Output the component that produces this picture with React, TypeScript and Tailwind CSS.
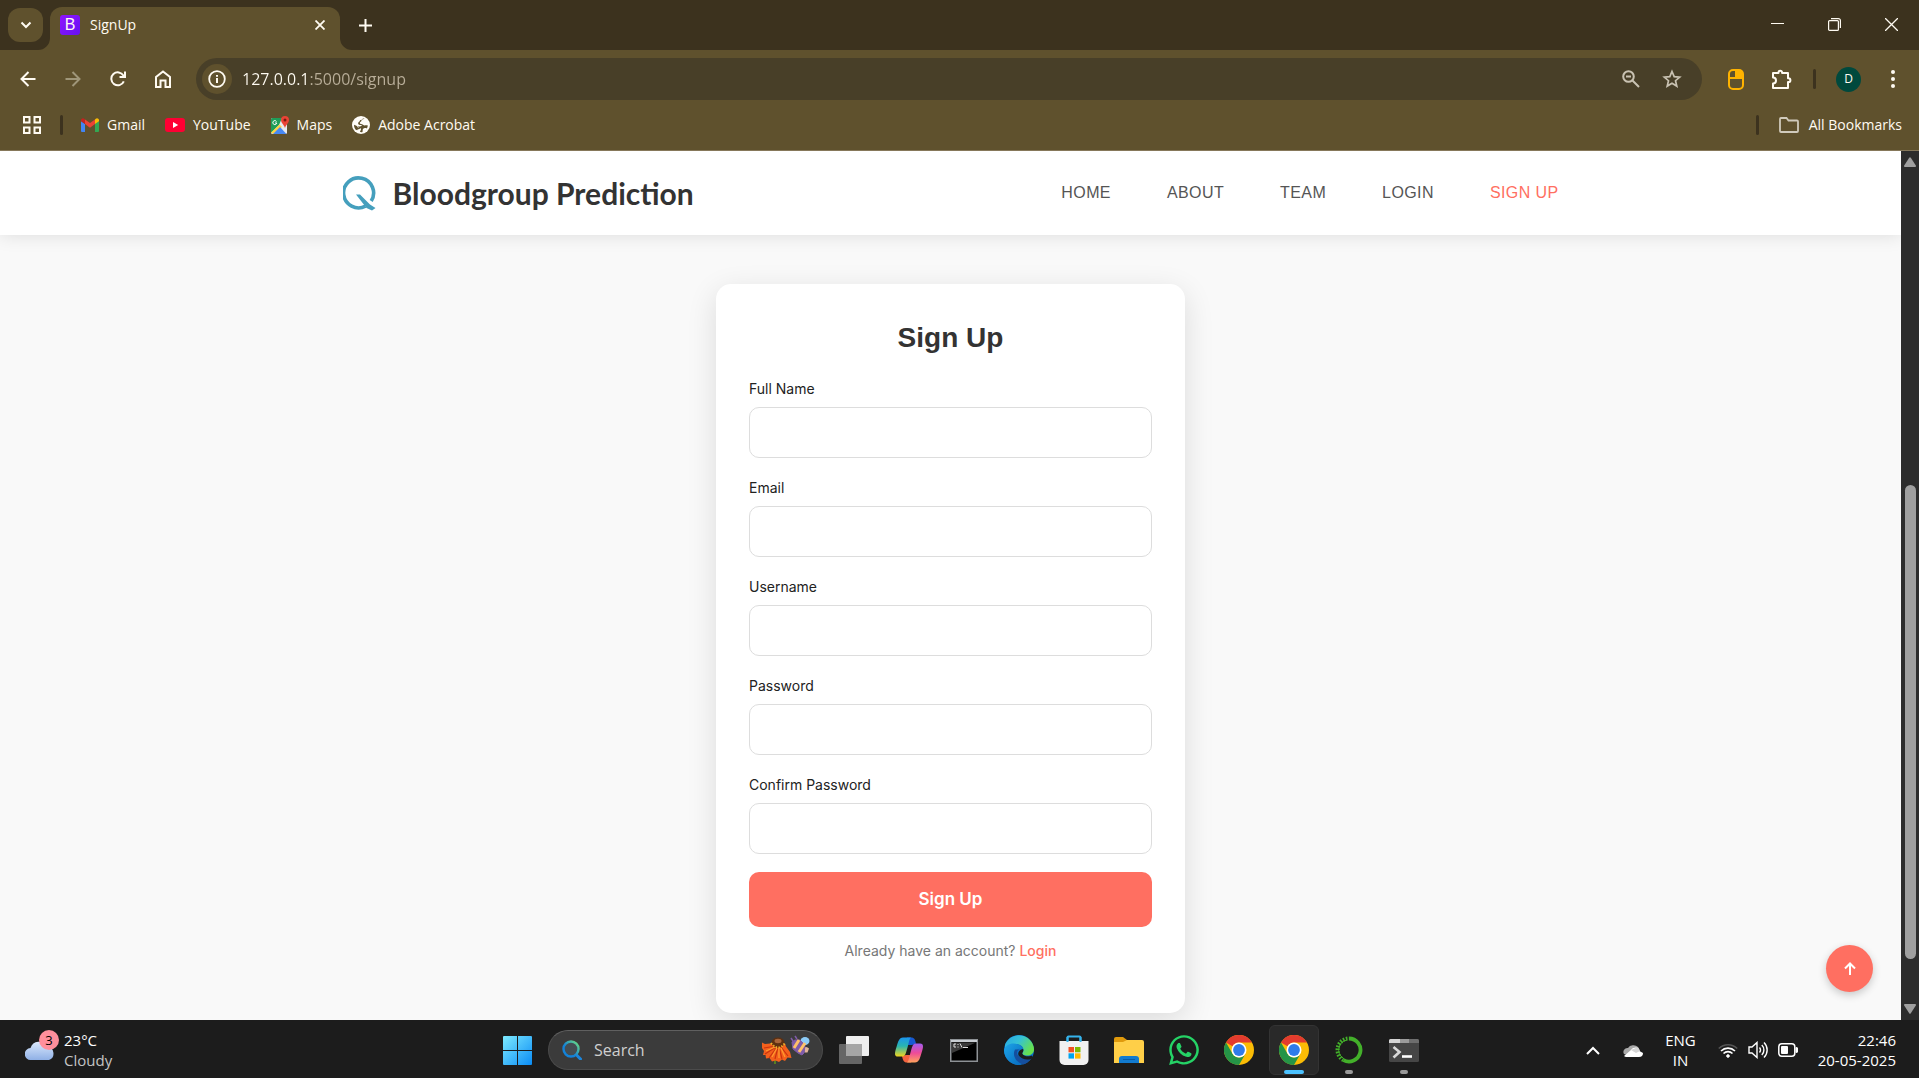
import React, { ReactNode } from "react";
import { FaWhatsapp } from "react-icons/fa";

type IconProps = { children: ReactNode; className: string; box: string };

function Icon({ children, className, box }: IconProps) {
  return (
    <svg
      viewBox={box}
      className={className}
      fill="none"
      stroke="currentColor"
      strokeWidth="2"
      aria-hidden="true"
    >
      {children}
    </svg>
  );
}

/* ---------- Browser ---------- */

function TabStrip() {
  return (
    <header className="flex h-[50px] items-end bg-[#3c321e] text-[#fffbf2]">
      <button aria-label="Search tabs" className="mb-2 ml-2 flex h-[34px] w-[35px] items-center justify-center rounded-xl bg-[#5f512d]">
        <Icon box="0 0 12 12" className="size-3"><path d="M1.5 3.5 6 8l4.500-4.500" /></Icon>
      </button>
      <div className="relative ml-[7px] flex h-[43px] w-[290px] items-center rounded-t-xl bg-[#5f512d] pb-2 pl-2.5 pr-[13px]">
        <svg viewBox="0 0 12 12" className="absolute -left-3 bottom-0 size-3 fill-[#5f512d]" aria-hidden="true"><path d="M12 0v12H0A12 12 0 0 0 12 0Z" /></svg>
        <svg viewBox="0 0 12 12" className="absolute -right-3 bottom-0 size-3 fill-[#5f512d]" aria-hidden="true"><path d="M0 0v12h12A12 12 0 0 1 0 0Z" /></svg>
        <span className="flex size-5 items-center justify-center rounded-[3px] bg-linear-to-br from-[#9013fe] to-[#6610f2] font-['Liberation_Sans'] text-base leading-none">B</span>
        <span className="ml-2.5 flex-1 text-sm">SignUp</span>
        <button aria-label="Close tab" className="p-0.5">
          <Icon box="0 0 10 10" className="size-2.5"><path d="m.5.5 9 9m0-9-9 9" strokeWidth="1.800" /></Icon>
        </button>
      </div>
      <button aria-label="New tab" className="mb-[18px] ml-[19px]">
        <Icon box="0 0 13 13" className="size-[13px]"><path d="M6.500 0v13M0 6.500h13" /></Icon>
      </button>
      <div className="mb-[19px] ml-auto mr-[21px] flex items-center gap-11">
        <button aria-label="Minimize"><Icon box="0 0 13 13" className="size-[13px]"><path d="M0 5.500h13" strokeWidth="1" /></Icon></button>
        <button aria-label="Restore">
          <Icon box="0 0 13 13" className="size-[13px]"><g strokeWidth="1.200"><rect x=".6" y="2.600" width="9.800" height="9.800" rx="1" /><path d="M3 .6h7.400a2 2 0 0 1 2 2V10" /></g></Icon>
        </button>
        <button aria-label="Close window"><Icon box="0 0 13 13" className="size-[13px]"><path d="m0 0 13 13M13 0 0 13" strokeWidth="1.300" /></Icon></button>
      </div>
    </header>
  );
}

function Toolbar() {
  return (
    <div className="flex h-[57px] items-center bg-[#5f512d] pl-5 pr-6 pt-px text-[#fffbf2]">
      <div className="flex gap-[29px]">
        <button aria-label="Back"><Icon box="0 0 16 16" className="size-4"><path d="M15.500 8H2M8.500 1 1.500 8l7 7" /></Icon></button>
        <button aria-label="Forward" className="text-[#9f9679]"><Icon box="0 0 16 16" className="size-4"><path d="M.5 8H14M7.500 1l7 7-7 7" /></Icon></button>
        <button aria-label="Reload">
          <Icon box="0 0 16 16" className="size-4"><path d="M13.800 10.400A6.500 6.500 0 1 1 13.400 4.500L14.500 6M15 .5V6H9.500" /></Icon>
        </button>
        <button aria-label="Home"><Icon box="0 0 16 18" className="h-[18px] w-4"><path d="M1 17V7l7-5.500L15 7v10h-4.500v-6.500h-5V17Z" /></Icon></button>
      </div>
      <div className="ml-[25px] flex h-[42px] flex-1 items-center rounded-full bg-[#483f28] pl-1.5 pr-5">
        <button aria-label="Site information" className="flex size-[30px] items-center justify-center rounded-full bg-[#5f512d]">
          <Icon box="0 0 18 18" className="size-[18px]"><circle cx="9" cy="9" r="7.800" strokeWidth="1.800" /><path d="M9 8v5M9 5v1.800" /></Icon>
        </button>
        {/* The host is bright and the rest of the address is dimmed. */}
        <input
          aria-label="Address"
          defaultValue="127.0.0.1:5000/signup"
          className="ml-2.5 min-w-0 flex-1 bg-linear-to-r from-[#fffbf2] from-[68px] to-[#b9ae99] to-[68px] bg-clip-text text-base text-transparent caret-white outline-none"
        />
        <div className="flex items-center gap-[22px] text-[#c9c2b2]">
          <button aria-label="Zoom"><Icon box="0 0 18 18" className="size-[18px]"><circle cx="6.500" cy="6.500" r="5.300" /><path d="m10.500 10.500 6.500 6.500M4 6.500h5" /></Icon></button>
          <button aria-label="Bookmark this page"><Icon box="0 0 20 20" className="size-5"><path d="m10 2.500 2.200 5.100 5.500.5-4.200 3.600 1.300 5.400L10 14.200l-4.800 2.900 1.300-5.400-4.200-3.600 5.500-.5Z" strokeWidth="1.700" /></Icon></button>
        </div>
      </div>
      <button aria-label="Mouse extension" className="ml-[26px]">
        <svg viewBox="0 0 16 21" className="h-[21px] w-4" aria-hidden="true"><rect x="1" y="1" width="14" height="19" rx="4" fill="none" stroke="#ffb300" strokeWidth="2" /><path d="M7 1h5a3 3 0 0 1 3 3v6H1V8h6Z" fill="#ffb300" /></svg>
      </button>
      <button aria-label="Extensions" className="ml-[27px]">
        <Icon box="0 0 21 21" className="size-[21px]"><path d="M2 4h5.500v-.5a1.800 1.800 0 0 1 3.600 0V4H17v5.300h.5a1.900 1.900 0 0 1 0 3.800H17V19H2v-4.500a3 3 0 0 0 0-6Z" strokeLinejoin="round" /></Icon>
      </button>
      <span className="ml-[21px] h-5 w-[3px] rounded-sm bg-[#3c321e]" />
      <button aria-label="Profile" className="ml-5 flex size-[25px] items-center justify-center rounded-full bg-[#00493d] text-xs">D</button>
      <button aria-label="Menu" className="ml-[30px]"><svg viewBox="0 0 4 18" className="h-[18px] w-1 fill-current" aria-hidden="true"><circle cx="2" cy="2" r="2" /><circle cx="2" cy="9" r="2" /><circle cx="2" cy="16" r="2" /></svg></button>
    </div>
  );
}

function GmailIcon() {
  return (
    <svg viewBox="0 0 18 14" className="h-3.5 w-[18px]" aria-hidden="true">
      <path d="M0 3v10a1 1 0 0 0 1 1h3V6Z" fill="#4285f4" />
      <path d="M18 3v10a1 1 0 0 1-1 1h-3V6Z" fill="#34a853" />
      <path d="M4 1.500 9 5l5-3.500V6L9 9.800 4 6Z" fill="#ea4335" />
      <path d="M0 2a2 2 0 0 1 3.200-1.200L4 1.500V6L0 3.300Z" fill="#c5221f" />
      <path d="M18 2A2 2 0 0 0 14.800.8l-.8.7V6l4-2.700Z" fill="#fbbc04" />
    </svg>
  );
}

function YoutubeIcon() {
  return <svg viewBox="0 0 20 14" className="h-3.5 w-5" aria-hidden="true"><rect width="20" height="14" rx="3" fill="#ff0033" /><path d="m8 4 5.200 3L8 10Z" fill="#fff" /></svg>;
}

function MapsIcon() {
  return (
    <svg viewBox="0 0 18 18" className="size-[18px]" aria-hidden="true">
      <rect y="2" width="16" height="16" rx="1.500" fill="#e8eaed" />
      <path d="M0 3.500A1.500 1.500 0 0 1 1.500 2H11L8 9l-8 8Z" fill="#1e9d58" />
      <path d="m0 16.500 8.500-8 2.500 2.400L2 18Z" fill="#fdd443" />
      <path d="M2 18 9 11l6.500 7Z" fill="#4788f4" />
      <path d="M5.500 5.500A2 2 0 1 0 5.800 7H4" fill="none" stroke="#fff" />
      <path d="M14 0a4 4 0 0 0-4 4c0 3 3 4.500 4 8 1-3.500 4-5 4-8a4 4 0 0 0-4-4Z" fill="#ea4335" />
      <circle cx="14" cy="4" r="1.500" fill="#791911" />
    </svg>
  );
}

function GlobeIcon() {
  return (
    <svg viewBox="0 0 18 18" className="size-[18px]" aria-hidden="true">
      <circle cx="9" cy="9" r="9" fill="#fffdf8" />
      <path d="M12.500 2.800c-1.500-.6-3 .4-3 1.700 0 1.500-1.700 1-1.700 2.500 0 1.300 2.200.8 3.200 1.800 1.200 1.200 2.500.2 4.800.7-.1 1-.4 2-.9 2.900-1.500-.4-3-.6-3.900.6-.6 1-.2 2-.5 2.900-.5.300-1.500.3-2.500.1.200-1.500 1-1.500 1-2.800 0-1-1.200-1.200-2-1.200-1.600 0-1.400-1.700-2.600-2.200L2.100 8.800c-.2 1.500.3 3.400 1.600 4.900l1.500.6c.3-1.500 3-.6 3-2.200-1.200-.3-2.200-.8-2.600-1.700 1.700.4 3.600 0 4.400-1.400-1.300.2-3.700.2-3.900-1.400C6 6 8 5.800 8 4.300Z" fill="#5f512d" />
    </svg>
  );
}

const bookmarks = [
  { label: "Gmail", icon: <GmailIcon /> },
  { label: "YouTube", icon: <YoutubeIcon /> },
  { label: "Maps", icon: <MapsIcon /> },
  { label: "Adobe Acrobat", icon: <GlobeIcon /> },
];

function BookmarkBar() {
  return (
    <nav aria-label="Bookmarks" className="flex h-11 items-center border-b border-[#86785a] bg-[#5f512d] pb-2 pl-[23px] pr-[17px] text-sm text-[#fffbf2]">
      <button aria-label="Apps"><Icon box="0 0 18 18" className="size-[18px]"><path d="M1 1h5.500v5.500H1ZM11.500 1H17v5.500h-5.500ZM1 11.500h5.500V17H1ZM11.500 11.500H17V17h-5.500Z" /></Icon></button>
      <span className="ml-[19px] h-5 w-[3px] rounded-sm bg-[#3c321e]" />
      <div className="ml-[18px] flex gap-5">
        {bookmarks.map((b) => (
          <a key={b.label} href="#" className="flex items-center gap-2 whitespace-nowrap">{b.icon}{b.label}</a>
        ))}
      </div>
      <span className="ml-auto h-5 w-[3px] rounded-sm bg-[#3c321e]" />
      <button className="ml-5 flex items-center gap-2.5 whitespace-nowrap">
        <Icon box="0 0 20 16" className="h-4 w-5 text-[#d0cabc]"><path d="M1 2a1 1 0 0 1 1-1h5.500l2 2.500H18a1 1 0 0 1 1 1V14a1 1 0 0 1-1 1H2a1 1 0 0 1-1-1Z" strokeWidth="1.800" /></Icon>
        All Bookmarks
      </button>
    </nav>
  );
}

/* ---------- Web page ---------- */

const links = ["Home", "About", "Team", "Login", "Sign Up"];

function SiteHeader() {
  return (
    <header className="relative z-10 bg-white shadow-[0_0_18px_rgba(0,0,0,0.12)]">
      <div className="mx-auto flex h-[84px] max-w-[1216px] items-center justify-between">
        <a href="#" className="flex items-center gap-4">
          <svg viewBox="0 0 34 36" className="h-9 w-[34px]" fill="none" stroke="#459fbd" strokeWidth="3.600" aria-hidden="true">
            <path d="M22.500 31.200A15 15 0 1 1 28.200 26" />
            <path d="M13 19.500h4L27 29.500l5.500 3.500-3.500 2.500-5.500-2.500Z" fill="#459fbd" stroke="none" />
          </svg>
          <span className="font-['Lato'] text-[30px] font-bold leading-9 text-[#333]">Bloodgroup Prediction</span>
        </a>
        <nav aria-label="Main" className="flex gap-14 font-['Liberation_Sans'] text-base uppercase leading-6 tracking-wide text-[#555]">
          {links.map((l) => (
            <a key={l} href="#" className={l === "Sign Up" ? "text-[#ff6f61]" : ""}>{l}</a>
          ))}
        </nav>
      </div>
    </header>
  );
}

const fields = [
  { id: "fullname", label: "Full Name", type: "text" },
  { id: "email", label: "Email", type: "email" },
  { id: "username", label: "Username", type: "text" },
  { id: "password", label: "Password", type: "password" },
  { id: "confirm", label: "Confirm Password", type: "password" },
];

function SignUpCard() {
  return (
    <section className="mx-auto mt-[49px] w-[469px] max-w-full rounded-[15px] bg-white px-[33px] pb-[52px] pt-[33px] font-['Inter'] shadow-[0_8px_30px_rgba(0,0,0,0.12)]">
      <h1 className="mb-5 text-center font-['Liberation_Sans'] text-[28px] font-bold leading-[42px] text-[#333]">Sign Up</h1>
      <form onSubmit={(e) => e.preventDefault()}>
        <div className="flex flex-col gap-5">
          {fields.map((f) => (
            <div key={f.id}>
              <label htmlFor={f.id} className="mb-2 block text-sm leading-5 text-[#222]">{f.label}</label>
              <input id={f.id} type={f.type} className="block h-[51px] w-full rounded-[10px] border border-[#ddd] px-4 outline-none" />
            </div>
          ))}
        </div>
        <button type="submit" className="mt-[18px] h-[55px] w-full rounded-[10px] bg-[#ff6f61] text-[17px] font-semibold text-white">Sign Up</button>
      </form>
      <p className="mt-3.5 text-center text-sm leading-5 text-[#777]">
        Already have an account? <a href="#" className="font-medium text-[#ff6f61]">Login</a>
      </p>
    </section>
  );
}

function Scrollbar() {
  return (
    <div className="flex w-[18px] flex-col items-center bg-[#2c2c2c] py-1.5 text-[#9f9f9f]">
      <svg viewBox="0 0 12 10" className="h-2.5 w-3 fill-current" aria-hidden="true"><path d="M5.200.8a1 1 0 0 1 1.600 0l5 7.700a1 1 0 0 1-.8 1.500H1a1 1 0 0 1-.8-1.500Z" /></svg>
      <div className="flex w-[11px] flex-1 flex-col">
        <div className="grow-[318]" />
        <div className="grow-[474] rounded-full bg-[#9f9f9f]" />
        <div className="grow-[45]" />
      </div>
      <svg viewBox="0 0 12 10" className="h-2.5 w-3 fill-current" aria-hidden="true"><path d="M5.200 9.200a1 1 0 0 0 1.600 0l5-7.700A1 1 0 0 0 11 0H1a1 1 0 0 0-.8 1.500Z" /></svg>
    </div>
  );
}

function WebPage() {
  return (
    <div className="flex min-h-0 flex-1">
      <main className="relative flex-1 overflow-hidden bg-[#f9f9f9]">
        <SiteHeader />
        <SignUpCard />
        <button aria-label="Back to top" className="absolute bottom-7 right-7 flex size-[47px] items-center justify-center rounded-full bg-[#ff6f61] text-white shadow-[0_3px_8px_rgba(0,0,0,0.2)]">
          <Icon box="0 0 12 14" className="h-3.5 w-3"><path d="M6 13V2M1 6.500 6 1.500l5 5" /></Icon>
        </button>
      </main>
      <Scrollbar />
    </div>
  );
}

/* ---------- Taskbar ---------- */

function SearchLens() {
  return (
    <svg viewBox="0 0 20 20" className="size-5" fill="none" aria-hidden="true">
      <defs><linearGradient id="lens" x1="0" y1="1" x2="1" y2="0"><stop offset=".4" stopColor="#1382d8" /><stop offset="1" stopColor="#6fe07a" /></linearGradient></defs>
      <path d="m14 14.500 4.500 4.500" stroke="#1b86dc" strokeWidth="3" strokeLinecap="round" />
      <circle cx="9" cy="9" r="7.500" fill="#444d52" stroke="url(#lens)" strokeWidth="2.400" />
    </svg>
  );
}

function FlowerArt() {
  return (
    <svg viewBox="0 0 48 30" className="h-[30px] w-12" aria-hidden="true">
      <path d="M13 24v5" stroke="#577f20" strokeWidth="2" />
      <path d="M0 7.500 3 9l5-.5h15l1 3 4 5.500 1.500 6-4-.5-2.500 3.500-3-1.500-3 2.500-3.500-1.500-3.500 1-2.500-3.500-3.500.5-.5-3.500L1 20l1-4-2-3Z" fill="#f4601c" />
      <path d="M14 11 2 13M14 12 3 19M15 12 7 23M16 12l-3 12M17 12l3 12M19 12l7 9" stroke="#c9330f" strokeWidth="1.200" />
      <path d="M13 12 4 16M15 13l-5 9M17 13l0 10M19 13l4 9" stroke="#ff9a2e" strokeWidth="1.300" />
      <ellipse cx="16" cy="7.500" rx="6.500" ry="5" fill="#5e3011" />
      <ellipse cx="16" cy="6" rx="3.500" ry="2.200" fill="#a9653a" />
      <path d="M9 8q7 9 14 0" fill="none" stroke="#eeb02c" strokeWidth="2" strokeDasharray="1.500 1.500" />
      <ellipse cx="43" cy="6" rx="4.500" ry="4" fill="#8ccbf7" />
      <path d="M42 12.500a4 4 0 0 1 5 1l-1.500 4h-3Z" fill="#e3b49a" />
      <path d="m30 7 3-2 5 0 5 5-1 8-2 2-4-2-5-4Z" fill="#7f5ba9" strokeLinejoin="round" stroke="#7f5ba9" />
      <path d="m32 13 5-8M37 17l6-9" stroke="#ffc168" strokeWidth="3" />
      <path d="m31 6-2-3m6 1-2-3" stroke="#7f5ba9" strokeWidth="1.500" />
    </svg>
  );
}

function TaskViewIcon() {
  return <svg viewBox="0 0 30 28" className="h-7 w-[30px]" aria-hidden="true"><rect x="7" width="23" height="20" rx="1" fill="#efefef" /><rect y="8" width="23" height="20" rx="1" fill="#666" /><path d="M7 8h16v12H7Z" fill="#a6a6a6" /></svg>;
}

function CopilotIcon() {
  return (
    <svg viewBox="0 0 30 26" className="h-[26px] w-[30px]" aria-hidden="true">
      <defs>
        <linearGradient id="cpa" x1="0" y1="0" x2="0" y2="1"><stop stopColor="#1b95ee" /><stop offset=".45" stopColor="#29b5b0" /><stop offset="1" stopColor="#f2d51c" /></linearGradient>
        <linearGradient id="cpb" x1="0" y1="0" x2="0" y2="1"><stop stopColor="#a35cf0" /><stop offset=".5" stopColor="#ee4b98" /><stop offset="1" stopColor="#ffa25c" /></linearGradient>
      </defs>
      <path d="M22 6.500C21 2 20 .5 17 .5h-4L11 8h7Z" fill="#1759d2" />
      <path d="M8 19c1 4 1.500 6.500 5 6.500h4L19 18h-7Z" fill="#f4633f" />
      <path d="M17 .5H9C5 .5 4 5 2.500 10S-.5 19.500 4 19.500h4.500c3 0 3.500-4 5-9S15 2 17 .5Z" fill="url(#cpa)" />
      <path d="M13 25.500h8c4 0 5-4.500 6.500-9.500s3-9.500-1.500-9.500h-4.500c-3 0-3.500 4-5 9S15 24 13 25.500Z" fill="url(#cpb)" />
    </svg>
  );
}

function CmdIcon() {
  return (
    <svg viewBox="0 0 28 23" className="h-[23px] w-7" aria-hidden="true">
      <rect x=".75" y=".75" width="26.500" height="21.500" fill="#000" stroke="#8e9296" strokeWidth="1.500" />
      <path d="M1 1h26v2H1Z" fill="#c8cdd2" /><path d="M2 3.500h24L2 14Z" fill="#3a3a3a" />
      <path d="M6 5H4v3h2M8 5v1m0 1.500v1M10 4.500l2 4M13 8.500h5" fill="none" stroke="#ddd" />
    </svg>
  );
}

function EdgeIcon() {
  return (
    <svg viewBox="0 0 30 30" className="size-[30px]" aria-hidden="true">
      <defs>
        <linearGradient id="eda" x1="0" y1="0" x2="1" y2=".5"><stop stopColor="#27a7e5" /><stop offset=".5" stopColor="#35c1d6" /><stop offset="1" stopColor="#66e04f" /></linearGradient>
        <linearGradient id="edb" x1="0" y1="0" x2="1" y2="1"><stop stopColor="#1ea5e8" /><stop offset="1" stopColor="#0669bd" /></linearGradient>
      </defs>
      <circle cx="15" cy="15" r="15" fill="#0b72c9" />
      <path d="M1 10A15 15 0 0 1 30 14c.3 4-3 6.500-7 6.500-4.500 0-5.500-1.500-4-3.500 2-4-2-8-7-8-4 0-8 1-11 5Z" fill="url(#eda)" />
      <path d="M0 15C1 11 5 8.500 9.500 8.500c5 0 9 3.500 9 5.500-5-1.500-9 2-8 7 .7 4 4 7 7 8.800A15 15 0 0 1 0 15Z" fill="url(#edb)" />
      <path d="M11 14.500c-3 5 .5 13 8.500 15 4-1.500 6.500-4 8-7-5 2.500-10 1.500-13-1.500-2-2-2-5 .5-6.500Z" fill="#154f9e" />
      <path d="M19 14c1.500 2-1.500 4-.5 5 1.700 3 7.500 2.500 9.500 1.500l1 2.500-2 1c-5 1.500-10-.5-12-3-1.500-2-1-6 4-7Z" fill="#1c1c1c" />
    </svg>
  );
}

function StoreIcon() {
  return (
    <svg viewBox="0 0 30 30" className="size-[30px]" aria-hidden="true">
      <path d="M8.500 7V2.500a1 1 0 0 1 1-1h11a1 1 0 0 1 1 1V7" fill="none" stroke="#35b3ec" strokeWidth="2" />
      <path d="M.5 6h29v19a5 5 0 0 1-5 5h-19a5 5 0 0 1-5-5Z" fill="#f1f1f1" />
      <path d="M8.500 2v5M21.500 2v5" stroke="#35b3ec" strokeWidth="2" />
      <path d="M9.500 12H15v5.300H9.500Z" fill="#f25022" /><path d="M16 12h5.500v5.300H16Z" fill="#7fba00" /><path d="M9.500 18.300H15v5.300H9.500Z" fill="#00a4ef" /><path d="M16 18.300h5.500v5.300H16Z" fill="#ffb900" />
    </svg>
  );
}

function FolderIcon() {
  return (
    <svg viewBox="0 0 30 27" className="h-[27px] w-[30px]" aria-hidden="true">
      <path d="M0 2a2 2 0 0 1 2-2h7l4 3v5H0Z" fill="#e09a0c" />
      <path d="M0 5h9l4-2h15a2 2 0 0 1 2 2v21H0Z" fill="#ffcf48" />
      <path d="M5 26v-4a3 3 0 0 1 3-3h14a3 3 0 0 1 3 3v4Z" fill="#127bd0" /><path d="M9 22.500h12" stroke="#0a5ba6" />
    </svg>
  );
}

function ChromeIcon() {
  return (
    <svg viewBox="0 0 30 30" className="size-[30px]" aria-hidden="true">
      <circle cx="15" cy="15" r="15" fill="#fbbc05" />
      <path d="M2 7.500A15 15 0 0 1 28 7.500H15A7.500 7.500 0 0 0 8.500 11.200Z" fill="#e33b2e" />
      <path d="M2 7.500 8.500 18.800A7.500 7.500 0 0 0 21.500 18.800L15 30A15 15 0 0 1 2 7.500Z" fill="#259447" />
      <circle cx="15" cy="15" r="7.500" fill="#fff" /><circle cx="15" cy="15" r="5.900" fill="#2f7bea" />
    </svg>
  );
}

function AnacondaIcon() {
  return (
    <svg viewBox="0 0 28 28" className="size-7" fill="none" stroke="#43b02a" aria-hidden="true">
      <path d="M14 2.500a11.500 11.500 0 1 1-5.500 21.600" strokeWidth="3.800" />
      <path d="M8.500 24.100A11.500 11.500 0 0 1 14 2.500" strokeWidth="4" strokeDasharray="1.600 1.400" />
      <path d="M8 22A10 10 0 0 1 12 4" strokeWidth="1" />
    </svg>
  );
}

function TerminalIcon() {
  return (
    <svg viewBox="0 0 30 23" className="h-[23px] w-[30px]" aria-hidden="true">
      <rect width="30" height="23" rx="1.500" fill="#464646" />
      <path d="M0 4V1.500A1.500 1.500 0 0 1 1.500 0H11v4Z" fill="#d5d5d5" /><path d="M11 0h9v4h-9Z" fill="#9b9b9b" /><path d="M20 0h8.500A1.500 1.500 0 0 1 30 1.500V4H20Z" fill="#6e6e6e" />
      <path d="m4.500 8 6 5-6 5.500" fill="none" stroke="#d8d8d8" strokeWidth="2.600" /><path d="M13 17.500h10" stroke="#fff" strokeWidth="2.600" />
    </svg>
  );
}

type TaskbarApp = { name: string; icon: ReactNode; state?: "active" | "open" };

const apps: TaskbarApp[] = [
  { name: "Task View", icon: <TaskViewIcon /> },
  { name: "Copilot", icon: <CopilotIcon /> },
  { name: "Command Prompt", icon: <CmdIcon /> },
  { name: "Edge", icon: <EdgeIcon /> },
  { name: "Microsoft Store", icon: <StoreIcon /> },
  { name: "File Explorer", icon: <FolderIcon /> },
  { name: "WhatsApp", icon: <FaWhatsapp className="size-[34px] text-[#25d366]" /> },
  { name: "Chrome", icon: <ChromeIcon /> },
  { name: "Chrome window", icon: <ChromeIcon />, state: "active" },
  { name: "Anaconda", icon: <AnacondaIcon />, state: "open" },
  { name: "Terminal", icon: <TerminalIcon />, state: "open" },
];

function Taskbar() {
  return (
    <footer className="grid h-[58px] shrink-0 grid-cols-[1fr_auto_1fr] items-center bg-[#1c1c1c] pt-0.5 text-[15px] leading-5 text-white">
      <button className="ml-[25px] flex items-center justify-self-start text-left">
        <span className="relative">
          <svg viewBox="0 0 30 20" className="h-5 w-[30px]" aria-hidden="true">
            <defs><linearGradient id="cloud" x1="0" y1="0" x2="0" y2="1"><stop stopColor="#dbe9fc" /><stop offset="1" stopColor="#8fb0e6" /></linearGradient></defs>
            <path d="M6 20a6 6 0 0 1-.5-12A9 9 0 0 1 22 6.500 7 7 0 0 1 24 20Z" fill="url(#cloud)" />
          </svg>
          <span className="absolute -top-2.5 left-3.5 flex size-5 items-center justify-center rounded-full bg-[#ff8f9c] text-[13px] leading-none text-black">3</span>
        </span>
        <span className="ml-[9px]">23°C<br /><span className="text-[#c4c4c4]">Cloudy</span></span>
      </button>
      <div className="ml-0.5 flex items-center">
        <button aria-label="Start" className="flex w-[55px] justify-center">
          <svg viewBox="0 0 29 29" className="size-[29px]" aria-hidden="true">
            <defs><linearGradient id="win" x1="0" y1="0" x2="29" y2="29" gradientUnits="userSpaceOnUse"><stop stopColor="#7deaff" /><stop offset="1" stopColor="#0a8cf5" /></linearGradient></defs>
            <path d="M1 0h13v14H0V1a1 1 0 0 1 1-1ZM15 0h13a1 1 0 0 1 1 1v13H15ZM0 15h14v14H1a1 1 0 0 1-1-1ZM15 15h14v13a1 1 0 0 1-1 1H15Z" fill="url(#win)" />
          </svg>
        </button>
        <div className="mx-[3px] flex h-10 w-[275px] items-center rounded-full border border-[#4b4b4b] border-t-[#606060] bg-[#3b3b3b] pl-[13px] pr-3">
          <SearchLens />
          <input type="search" aria-label="Search" placeholder="Search" className="ml-3 w-0 flex-1 bg-transparent text-base text-white outline-none placeholder:text-[#cfcfcf]" />
          <FlowerArt />
        </div>
        {apps.map((a) => (
          <button key={a.name} aria-label={a.name} className="flex w-[55px] justify-center">
            <span className={a.state === "active" ? "relative flex h-[50px] w-[50px] items-center justify-center rounded-md border border-[#333] bg-[#292929]" : "relative flex h-[50px] w-[50px] items-center justify-center"}>
              {a.icon}
              {a.state === "active" && <span className="absolute bottom-0 h-1 w-5 rounded-full bg-[#4cc2ff]" />}
              {a.state === "open" && <span className="absolute bottom-px h-1 w-2 rounded-full bg-[#9a9a9a]" />}
            </span>
          </button>
        ))}
      </div>
      <div className="mr-[23px] flex items-center justify-self-end">
        <button aria-label="Hidden icons"><Icon box="0 0 14 9" className="h-[9px] w-3.5"><path d="m1 8 6-6 6 6" /></Icon></button>
        <svg viewBox="0 0 20 13" className="ml-[23px] h-[13px] w-5" aria-hidden="true">
          <path d="M5 4a6 5 0 0 1 10-1l-5 6-6 2-3-1a4 4 0 0 1 4-6Z" fill="#a9a9a9" /><path d="M8 6c3-4 9-2.500 8.500 1L20 9a4 4 0 0 1-4 4H4a4 4 0 0 1-3-1Z" fill="#fff" /><path d="m8 6 7-3 2 4-4 2Z" fill="#d6d6d6" />
        </svg>
        <button className="ml-[22px] text-center">ENG<br />IN</button>
        <div className="ml-[22px] flex items-center gap-2.5">
          <svg viewBox="0 0 20 15" className="h-[15px] w-5" fill="none" stroke="#fff" strokeWidth="1.600" aria-hidden="true">
            <path d="M.8 5.500a13 13 0 0 1 18.400 0" stroke="#555" /><path d="M3 8a10 10 0 0 1 14 0M5.500 10.500a6.400 6.400 0 0 1 9 0" /><circle cx="10" cy="13" r="1.300" fill="#fff" strokeWidth="1" />
          </svg>
          <svg viewBox="0 0 20 18" className="h-[18px] w-5" fill="none" stroke="#fff" strokeWidth="1.400" aria-hidden="true">
            <path d="M1 6h3l5-4.500v15L4 12H1ZM11.500 6.500a4 4 0 0 1 0 5M13.800 4a7 7 0 0 1 0 10M16 1.500a10.500 10.500 0 0 1 0 15" />
          </svg>
          <svg viewBox="0 0 20 14" className="h-3.5 w-5" aria-hidden="true"><rect x=".8" y=".8" width="16" height="12.400" rx="3" fill="none" stroke="#fff" strokeWidth="1.500" /><rect x="3" y="3" width="7" height="8" rx="1" fill="#fff" /><path d="M18 4.500a2.500 2.500 0 0 1 0 5Z" fill="#fff" stroke="#fff" /></svg>
        </div>
        <button className="ml-5 whitespace-nowrap text-right">22:46<br />20-05-2025</button>
      </div>
    </footer>
  );
}

export default function App() {
  return (
    <div className="flex h-screen flex-col overflow-hidden bg-[#3c321e] font-['Open_Sans',sans-serif]">
      <TabStrip />
      <Toolbar />
      <BookmarkBar />
      <WebPage />
      <Taskbar />
    </div>
  );
}
